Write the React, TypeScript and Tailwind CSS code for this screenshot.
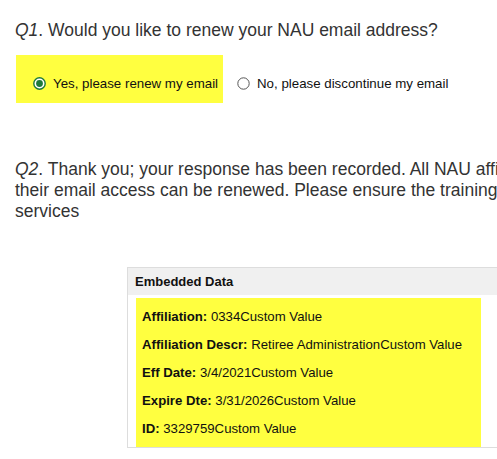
import React from 'react'

const rows = [
  { label: 'Affiliation:', value: '0334Custom Value' },
  { label: 'Affiliation Descr:', value: 'Retiree AdministrationCustom Value' },
  { label: 'Eff Date:', value: '3/4/2021Custom Value' },
  { label: 'Expire Dte:', value: '3/31/2026Custom Value' },
  { label: 'ID:', value: '3329759Custom Value' },
]

function Radio({ checked }: { checked?: boolean }) {
  return (
    <svg width="13" height="13" viewBox="0 0 13 13" className="shrink-0">
      {checked ? (
        <>
          <circle cx="6.5" cy="6.5" r="5.7" fill="#fff" stroke="#1d7a3a" strokeWidth="1.4" />
          <circle cx="6.5" cy="6.5" r="3.4" fill="#1d7a3a" />
        </>
      ) : (
        <circle cx="6.5" cy="6.5" r="5.7" fill="#fff" stroke="#555" strokeWidth="1" />
      )}
    </svg>
  )
}

export default function App() {
  return (
    <div className="w-[497px] h-[459px] overflow-hidden bg-white font-['Liberation_Sans',Arial,sans-serif] text-[#333]">
      <div className="pl-[15px] pt-[20px] text-[17.5px] leading-[21px] whitespace-nowrap">
        <i>Q1</i>. Would you like to renew your NAU email address?
      </div>

      <div className="flex items-center mt-[14px] ml-[16px] text-[13.3px] text-[#111]">
        <div className="flex items-center gap-[7px] h-[48px] w-[207px] bg-[#ffff40] pl-[17px] pt-[9px]">
          <Radio checked />
          <span>Yes, please renew my email</span>
        </div>
        <div className="flex items-center gap-[7px] pl-[14px] pt-[9px]">
          <Radio />
          <span>No, please discontinue my email</span>
        </div>
      </div>

      <div className="pl-[15px] mt-[56px] text-[17.5px] leading-[21px] whitespace-nowrap">
        <div>
          <i>Q2</i>. Thank you; your response has been recorded. All NAU affiliates must complete
        </div>
        <div>their email access can be renewed. Please ensure the training has been completed for</div>
        <div>services</div>
      </div>

      <div className="ml-[127px] mt-[45px] w-[400px] border border-[#ddd]">
        <div className="h-[27px] bg-[#f0f0f0] pl-[7px] flex items-center text-[13px] font-bold text-[#111]">
          Embedded Data
        </div>
        <div className="ml-[8px] mt-[3px] w-[345px] h-[149px] bg-[#ffff40] pl-[6px] pt-[11px] text-[13.2px] text-[#111]">
          {rows.map((r) => (
            <div key={r.label} className="h-[28px] leading-[15px] whitespace-nowrap">
              <b>{r.label}</b> {r.value}
            </div>
          ))}
        </div>
      </div>
    </div>
  )
}
